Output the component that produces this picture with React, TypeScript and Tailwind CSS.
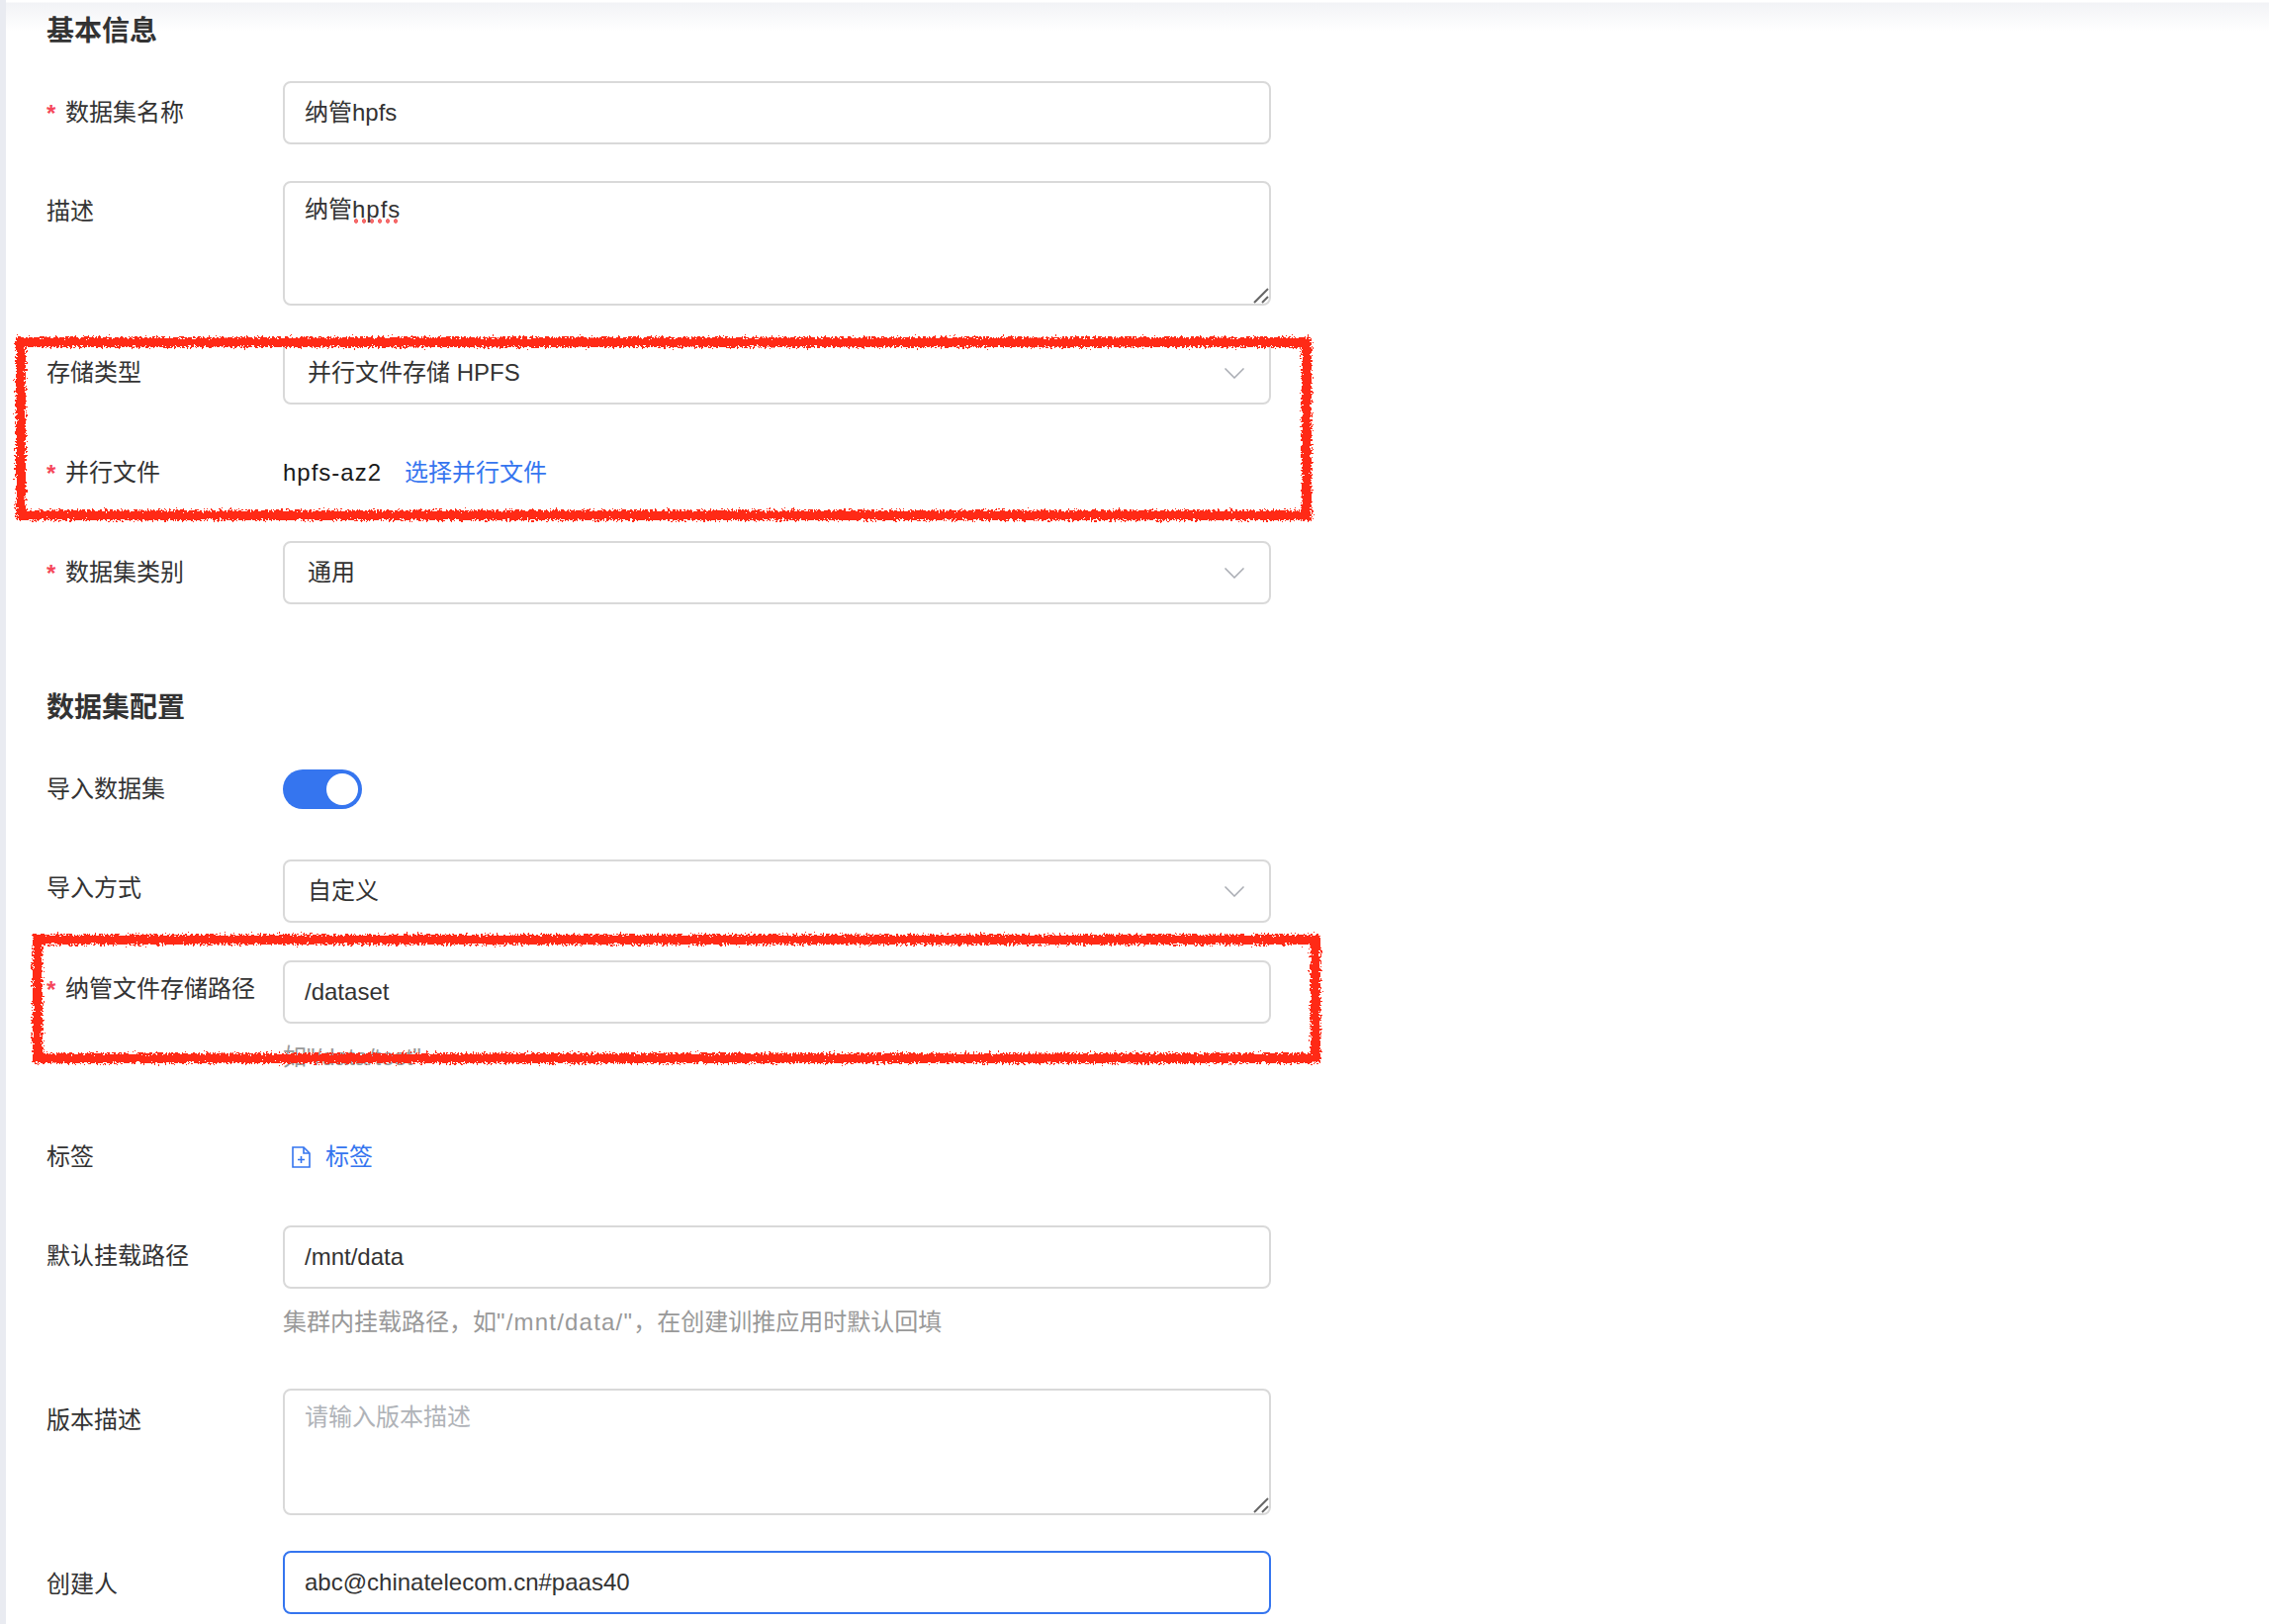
import * as React from "react";

const Chevron = () => (
  <svg width="20" height="11" viewBox="0 0 20 11" fill="none" className="shrink-0">
    <path d="M0.5 0.5 L10 10 L19.5 0.5" stroke="#a8abb2" strokeWidth="1.5" />
  </svg>
);

const Row = ({
  label,
  required,
  className = "",
  labelClass = "",
  children,
}: {
  label: string;
  required?: boolean;
  className?: string;
  labelClass?: string;
  children: React.ReactNode;
}) => (
  <div className={`flex items-start ${className}`}>
    <div className={`w-[239px] h-16 shrink-0 flex items-center text-[24px] text-[#333] whitespace-nowrap ${labelClass}`}>
      {required && <span className="w-[19px] mt-[1px] text-[24px] font-bold leading-none text-[#f5475a]">*</span>}
      {label}
    </div>
    <div className="w-[999px] shrink-0">{children}</div>
  </div>
);

const Input = ({ value, focused }: { value: string; focused?: boolean }) => (
  <div
    className={`h-16 px-[20px] flex items-center rounded-lg border-2 text-[24px] text-[#333] ${
      focused ? "border-[#3575ef]" : "border-[#d9d9d9]"
    }`}
  >
    {value}
  </div>
);

const Select = ({ value }: { value: string }) => (
  <div className="h-16 pl-[23px] pr-[25px] flex items-center justify-between rounded-lg border-2 border-[#d9d9d9] text-[24px] text-[#333]">
    <span>{value}</span>
    <Chevron />
  </div>
);

const TextArea = ({ className = "", children }: { className?: string; children: React.ReactNode }) => (
  <div className={`relative px-[20px] py-[9px] rounded-lg border-2 border-[#d9d9d9] text-[24px] text-[#333] ${className}`}>
    {children}
    {/* resize grip */}
    <svg className="absolute right-0 bottom-0" width="16" height="16" viewBox="0 0 16 16" fill="none" stroke="#666" strokeWidth="2">
      <path d="M1 15 L15 1" />
      <path d="M9 15 L15 9" />
    </svg>
  </div>
);

const Heading = ({ children, className = "" }: { children: React.ReactNode; className?: string }) => (
  <h2 className={`h-10 pt-[4px] flex items-center text-[28px] font-bold text-[#333] ${className}`}>{children}</h2>
);

const Hint = ({ children, className = "" }: { children: React.ReactNode; className?: string }) => (
  <div className={`h-8 flex items-center ml-[239px] text-[24px] text-[#999] whitespace-nowrap ${className}`}>{children}</div>
);

// red marker boxes drawn over the form
const Marker = () => (
  <svg className="absolute -left-[6px] top-0 pointer-events-none" width="2294" height="1642" fill="none">
    <defs>
      <filter id="rough" x="-5%" y="-5%" width="110%" height="110%">
        <feTurbulence type="fractalNoise" baseFrequency="0.45" numOctaves="3" seed="4" result="n" />
        <feDisplacementMap in="SourceGraphic" in2="n" scale="9" />
        <feGaussianBlur stdDeviation="0.5" />
      </filter>
    </defs>
    <g filter="url(#rough)" stroke="#ff2a12" strokeWidth="10">
      <rect x="21" y="346" width="1300" height="175" />
      <rect x="38" y="950" width="1292" height="120" />
    </g>
  </svg>
);

export default function App() {
  return (
    <div className="relative w-[2294px] h-[1642px] overflow-hidden bg-[linear-gradient(#fff_2px,#f2f3f6_3px,#fff_32px)] pl-[41px] pt-[10px] border-l-[6px] border-[#e9ebf1] box-border [font-family:'Liberation_Sans','Noto_Sans_CJK_SC',sans-serif]">
      <Heading>基本信息</Heading>
      <Row label="数据集名称" required className="mt-8">
        <Input value="纳管hpfs" />
      </Row>
      <Row label="描述" className="mt-[37px]" labelClass="-mt-[1px]">
        <TextArea className="h-[126px]">
          纳管
          <span className="inline-block tracking-[1px] bg-[radial-gradient(circle,#f56a6a_2px,transparent_2.5px)] bg-[length:8px_5px] bg-repeat-x bg-[position:0_27px]">
            hpfs
          </span>
        </TextArea>
      </Row>
      <Row label="存储类型" className="mt-[36px]">
        <Select value="并行文件存储 HPFS" />
      </Row>
      <Row label="并行文件" required className="mt-[37px]">
        <div className="h-16 flex items-center text-[24px]">
          <span className="text-[#1a1a1a] tracking-[1px]">hpfs-az2</span>
          <span className="ml-[23px] text-[#3575ef]">选择并行文件</span>
        </div>
      </Row>
      <Row label="数据集类别" required className="mt-[37px]">
        <Select value="通用" />
      </Row>

      <Heading className="mt-[83px]">数据集配置</Heading>
      <Row label="导入数据集" className="mt-8">
        <div className="h-16 flex items-center">
          <div className="w-20 h-10 pr-1 flex items-center justify-end rounded-full bg-[#3575ef]">
            <div className="w-8 h-8 rounded-full bg-white" />
          </div>
        </div>
      </Row>
      <Row label="导入方式" className="mt-[39px]" labelClass="-mt-[3px]">
        <Select value="自定义" />
      </Row>
      <Row label="纳管文件存储路径" required className="mt-[38px]" labelClass="-mt-[3px]">
        <Input value="/dataset" />
      </Row>
      <Hint className="mt-[18px]">如"/data/test"</Hint>
      <Row label="标签" className="mt-[53px]">
        <div className="h-16 pl-[9px] flex items-center text-[24px] text-[#3575ef]">
          <svg width="19" height="22" viewBox="0 0 19 22" fill="none" stroke="#3575ef" strokeWidth="1.6">
            <path d="M1 1 H12 L18 7 V21 H1 Z" />
            <path d="M12 1 V7 H18" />
            <path d="M9.5 10 V17 M6 13.5 H13" />
          </svg>
          <span className="ml-[15px]">标签</span>
        </div>
      </Row>
      <Row label="默认挂载路径" className="mt-[37px]" labelClass="-mt-[1px]">
        <Input value="/mnt/data" />
      </Row>
      <Hint className="mt-[18px]">
        <span>
          集群内挂载路径，如<span className="tracking-[1.2px]">"/mnt/data/"</span>，在创建训推应用时默认回填
        </span>
      </Hint>
      <Row label="版本描述" className="mt-[51px]">
        <TextArea className="h-[128px]">
          <span className="text-[#b0b3b8]">请输入版本描述</span>
        </TextArea>
      </Row>
      <Row label="创建人" className="mt-[36px]" labelClass="mt-[2px]">
        <Input value="abc@chinatelecom.cn#paas40" focused />
      </Row>
      <Marker />
    </div>
  );
}
